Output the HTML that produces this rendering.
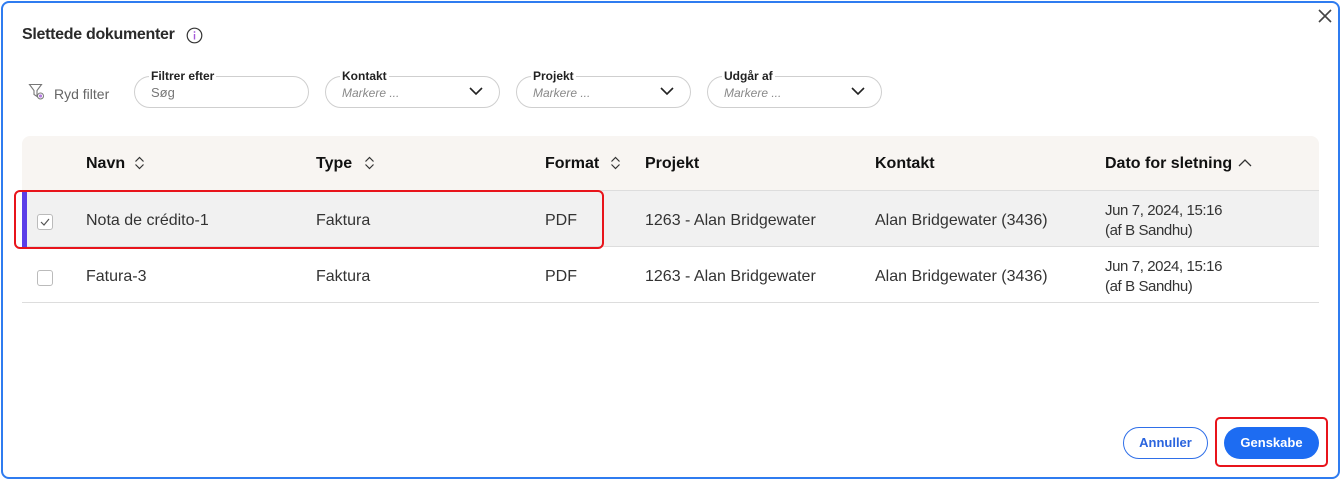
<!DOCTYPE html>
<html><head><meta charset="utf-8"><style>
*{margin:0;padding:0;box-sizing:border-box}
body{width:1341px;height:481px;background:#fff;font-family:"Liberation Sans",sans-serif;position:relative;overflow:hidden;color:#222}
.a{position:absolute}
.frame{left:1px;top:1px;width:1339px;height:478px;border:2px solid #2f7cf0;border-radius:8px}
.title{left:22px;top:26px;font-size:16px;font-weight:bold;color:#2a2a2a;letter-spacing:-0.3px}
.fld{height:32px;border:1px solid #cfcfcf;border-radius:16px;top:76px}
.lbl{top:-8px;left:14px;background:#fff;padding:0 2px;font-size:12px;font-weight:bold;color:#222;line-height:14px}
.ph{top:9px;left:16px;font-size:12px;color:#888;font-style:italic}
.chev{right:16px;top:9px}
.hdr{left:22px;top:136px;width:1297px;height:55px;background:#f8f5f2;border-radius:8px 8px 0 0;border-bottom:1px solid #ddd}
.th{top:155px;font-size:16px;font-weight:bold;color:#111}
.td{font-size:16px;color:#333}
.dt{font-size:15px;color:#333;letter-spacing:-0.4px;line-height:20px}
.row{left:22px;width:1297px;height:56px;border-bottom:1px solid #ddd}
.cb{width:16px;height:16px;border:1px solid #bbb;border-radius:3px;background:#fff}
</style></head><body>
<div class="a frame"></div>
<div class="a title">Slettede dokumenter</div>
<svg class="a" style="left:186px;top:27px" width="17" height="17" viewBox="0 0 17 17"><circle cx="8.5" cy="8.5" r="7.3" fill="none" stroke="#333" stroke-width="1.2"/><rect x="7.8" y="7" width="1.4" height="5.5" fill="#a55ad8"/><circle cx="8.5" cy="5" r=".9" fill="#a55ad8"/></svg>
<svg class="a" style="left:1317px;top:8px" width="16" height="16" viewBox="0 0 16 16"><path d="M2 2L14 14M14 2L2 14" stroke="#444" stroke-width="1.6"/></svg>
<svg class="a" style="left:28px;top:83px" width="18" height="18" viewBox="0 0 18 18"><path d="M1.5 1.5h12l-4.5 6v6l-3-2v-4z" fill="none" stroke="#777" stroke-width="1.1"/><circle cx="12.5" cy="13" r="3" fill="#fff" stroke="#777"/><circle cx="12.5" cy="13" r="1.6" fill="#b57be0"/></svg>
<div class="a" style="left:54px;top:86px;font-size:14px;color:#666">Ryd filter</div>

<div class="a fld" style="left:134px;width:175px"><div class="a lbl">Filtrer efter</div><div class="a ph" style="font-style:normal;color:#777;font-size:13px;top:8px">Søg</div></div>
<div class="a fld" style="left:325px;width:175px"><div class="a lbl">Kontakt</div><div class="a ph">Markere ...</div><svg class="a chev" width="14" height="10"><path d="M1 2l6 6 6-6" fill="none" stroke="#222" stroke-width="1.6"/></svg></div>
<div class="a fld" style="left:516px;width:175px"><div class="a lbl">Projekt</div><div class="a ph">Markere ...</div><svg class="a chev" width="14" height="10"><path d="M1 2l6 6 6-6" fill="none" stroke="#222" stroke-width="1.6"/></svg></div>
<div class="a fld" style="left:707px;width:175px"><div class="a lbl">Udgår af</div><div class="a ph">Markere ...</div><svg class="a chev" width="14" height="10"><path d="M1 2l6 6 6-6" fill="none" stroke="#222" stroke-width="1.6"/></svg></div>

<div class="a hdr"></div>
<div class="a th" style="left:86px">Navn</div>
<div class="a th" style="left:316px">Type</div>
<div class="a th" style="left:545px">Format</div>
<div class="a th" style="left:645px">Projekt</div>
<div class="a th" style="left:875px">Kontakt</div>
<div class="a th" style="left:1105px">Dato for sletning</div>
<svg class="a" style="left:134px;top:156px" width="11" height="14"><path d="M1.5 5.5l4-4 4 4M1.5 8.5l4 4 4-4" fill="none" stroke="#333" stroke-width="1.2"/></svg>
<svg class="a" style="left:364px;top:156px" width="11" height="14"><path d="M1.5 5.5l4-4 4 4M1.5 8.5l4 4 4-4" fill="none" stroke="#333" stroke-width="1.2"/></svg>
<svg class="a" style="left:610px;top:156px" width="11" height="14"><path d="M1.5 5.5l4-4 4 4M1.5 8.5l4 4 4-4" fill="none" stroke="#333" stroke-width="1.2"/></svg>
<svg class="a" style="left:1238px;top:158px" width="14" height="10"><path d="M1 8l6-6 6 6" fill="none" stroke="#333" stroke-width="1.3"/></svg>

<div class="a row" style="top:191px;background:#f1f1f1"></div>
<div class="a" style="left:22px;top:191px;width:5px;height:56px;background:#5b3ee8"></div>
<div class="a cb" style="left:37px;top:214px"></div>
<svg class="a" style="left:39px;top:216px" width="12" height="12"><path d="M2 6l3 3 5-6" fill="none" stroke="#555" stroke-width="1.2"/></svg>
<div class="a td" style="left:86px;top:212px">Nota de crédito-1</div>
<div class="a td" style="left:316px;top:212px">Faktura</div>
<div class="a td" style="left:545px;top:212px">PDF</div>
<div class="a td" style="left:645px;top:212px">1263 - Alan Bridgewater</div>
<div class="a td" style="left:875px;top:212px">Alan Bridgewater (3436)</div>
<div class="a dt" style="left:1105px;top:201px">Jun 7, 2024, 15:16<br>(af B Sandhu)</div>
<div class="a" style="left:14px;top:190px;width:590px;height:59px;border:2px solid #e8141b;border-radius:6px"></div>

<div class="a row" style="top:247px"></div>
<div class="a cb" style="left:37px;top:270px"></div>
<div class="a td" style="left:86px;top:268px">Fatura-3</div>
<div class="a td" style="left:316px;top:268px">Faktura</div>
<div class="a td" style="left:545px;top:268px">PDF</div>
<div class="a td" style="left:645px;top:268px">1263 - Alan Bridgewater</div>
<div class="a td" style="left:875px;top:268px">Alan Bridgewater (3436)</div>
<div class="a dt" style="left:1105px;top:257px">Jun 7, 2024, 15:16<br>(af B Sandhu)</div>

<div class="a" style="left:1123px;top:427px;width:85px;height:32px;border:1px solid #2f6fe8;border-radius:16px;color:#2a64de;font-size:13px;font-weight:bold;text-align:center;line-height:30px">Annuller</div>
<div class="a" style="left:1224px;top:427px;width:95px;height:32px;background:#1d6cf2;border-radius:16px;color:#fff;font-size:13px;font-weight:bold;text-align:center;line-height:32px">Genskabe</div>
<div class="a" style="left:1215px;top:417px;width:113px;height:50px;border:2px solid #e8141b;border-radius:5px"></div>
</body></html>
